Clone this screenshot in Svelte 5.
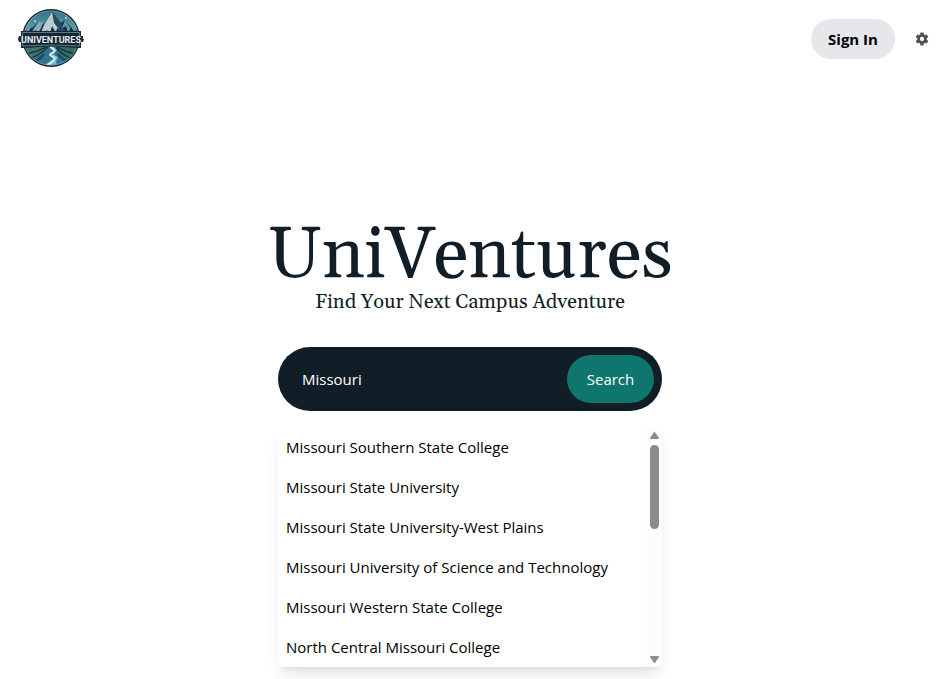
<script>
  let query = $state('Missouri');
  const colleges = [
    'Missouri Southern State College',
    'Missouri State University',
    'Missouri State University-West Plains',
    'Missouri University of Science and Technology',
    'Missouri Western State College',
    'North Central Missouri College'
  ];
</script>

<div class="page">
  <header>
    <a class="logo" href="#home" aria-label="UniVentures home">
      <svg width="66" height="60" viewBox="0 0 66 60">
        <defs>
          <clipPath id="disc"><circle cx="33" cy="30" r="27" /></clipPath>
          <linearGradient id="sky" x1="0" y1="0" x2="0" y2="1">
            <stop offset="0" stop-color="#2b7184" />
            <stop offset="1" stop-color="#75b6bf" />
          </linearGradient>
        </defs>
        <circle cx="33" cy="30" r="29" fill="#142937" />
        <circle cx="33" cy="30" r="27.6" fill="#8eb7bf" />
        <g clip-path="url(#disc)">
          <rect x="4" y="1" width="58" height="30" fill="url(#sky)" />
          <path d="M8 26 21 13l5 3L34 4l9 11 4-3 14 17H6z" fill="#173448" />
          <path d="M34 4l-8 13-4 10 7-5 2 6 3-10 4 7 1-5 5 4-4-9z" fill="#b9cdd2" />
          <path d="M34 4l2 11 4 5 3 8h7L43 15z" fill="#234c61" />
          <path d="M21 13l-8 12 5-3 1 5 4-7 2-5z" fill="#83aeb9" />
          <path d="M47 12l-3 8 4-2 2 7 3-4 5 7z" fill="#5f98a8" />
          <path d="M5 30l3-9 2 6 3-8 3 8 2-5 3 8zM45 30l3-8 2 5 3-8 3 8 2-6 3 9z" fill="#102938" />
          <circle cx="17" cy="13" r="1" fill="#c4dfe2" />
          <circle cx="48" cy="10" r="1" fill="#c4dfe2" />
          <rect x="4" y="38" width="58" height="22" fill="#347389" />
          <path d="M4 38h26L18 50 4 48z" fill="#3f7766" />
          <path d="M36 38h27v11l-15 2z" fill="#376b63" />
          <path d="M5 46q12-1 23-7M10 51q11-3 20-12M61 46q-12-1-22-7M57 51q-11-2-19-11" fill="none" stroke="#173b45" stroke-width="1.6" />
          <path d="M32 39l3 4-4 4 4 4-11 8h17l-3-5 2-5-5-3 4-4-4-4z" fill="#72bdce" />
          <path d="M32 39q8 4 2 6-5 2 2 4 3 3-7 8" fill="none" stroke="#e2f1f2" stroke-width="1.6" />
          <path d="M13 55q9-3 13-9M53 55q-9-3-13-9" fill="none" stroke="#17516d" stroke-width="3" />
        </g>
        <path d="M3 23h60v5h2v3h1l-1 3h-2v6h-4q-26-3-52 0H3v-6H1l-1-3 1-3h2z" fill="#152734" />
        <path d="M4.500 24.500h57v13.500q-28-2-57 0z" fill="none" stroke="#8299a2" stroke-width=".7" />
        <text x="33" y="34.500" text-anchor="middle">UNIVENTURES</text>
      </svg>
    </a>
    <div class="actions">
      <button class="signin" type="button">Sign In</button>
      <button class="settings" type="button" aria-label="Settings">
        <svg width="16" height="16" viewBox="0 0 24 24" fill="#505050">
          <path d="M19.140 12.940c.04-.3.06-.61.06-.94 0-.32-.02-.64-.07-.94l2.030-1.580a.49.49 0 0 0 .12-.61l-1.920-3.320a.488.488 0 0 0-.59-.22l-2.390.96c-.5-.38-1.030-.7-1.620-.94l-.36-2.540a.484.484 0 0 0-.48-.41h-3.840c-.24 0-.43.17-.47.41l-.36 2.540c-.59.24-1.130.57-1.620.94l-2.390-.96c-.22-.08-.47 0-.59.22L2.740 8.870c-.12.21-.08.47.12.61l2.030 1.580c-.05.3-.09.63-.09.94s.02.64.07.94l-2.030 1.580a.49.49 0 0 0-.12.61l1.920 3.320c.12.22.37.29.59.22l2.390-.96c.5.38 1.030.7 1.620.94l.36 2.540c.05.24.24.41.48.41h3.840c.24 0 .44-.17.47-.41l.36-2.540c.59-.24 1.130-.56 1.620-.94l2.390.96c.22.08.47 0 .59-.22l1.920-3.320c.12-.22.07-.47-.12-.61l-2.010-1.580zM12 15.200A3.200 3.200 0 1 1 12 8.800a3.200 3.200 0 0 1 0 6.400z" />
        </svg>
      </button>
    </div>
  </header>

  <main>
    <h1>UniVentures</h1>
    <p>Find Your Next Campus Adventure</p>
    <form onsubmit={(e) => e.preventDefault()}>
      <input type="text" aria-label="Search colleges" bind:value={query} />
      <button type="submit">Search</button>
    </form>
    <div class="results">
      <ul>
        {#each colleges as college}
          <li><button type="button" onclick={() => (query = college)}>{college}</button></li>
        {/each}
      </ul>
      <div class="scrollbar" aria-hidden="true">
        <svg width="9" height="7" viewBox="0 0 9 7"><path d="M4.500 0 Q5 0 5.500 1L9 6Q9 7 8 7H1Q0 7 0 6L3.500 1Q4 0 4.500 0z" /></svg>
        <div class="track"><div class="thumb"></div></div>
        <svg width="9" height="7" viewBox="0 0 9 7"><path d="M4.500 7Q4 7 3.500 6L0 1Q0 0 1 0H8Q9 0 9 1L5.500 6Q5 7 4.500 7z" /></svg>
      </div>
    </div>
  </main>
</div>

<style>
  :global(body) {
    margin: 0;
    background: #fff;
  }
  .page {
    font-family: 'Segoe UI', 'Open Sans', 'Noto Sans', sans-serif;
    font-size: 15px;
    line-height: 24px;
    color: #000;
    overflow: hidden;
  }
  * {
    box-sizing: border-box;
  }
  button,
  input {
    font: inherit;
    border: 0;
    padding: 0;
    background: none;
    color: inherit;
  }
  button {
    cursor: pointer;
  }
  svg {
    display: block;
  }
  header {
    display: flex;
    align-items: flex-start;
    justify-content: space-between;
    height: 78px;
    padding: 8px 11px 0 18px;
  }
  .logo text {
    font: bold 9px Roboto, sans-serif;
    fill: #e4edef;
  }
  .actions {
    display: flex;
    align-items: center;
    gap: 19px;
    padding-top: 11px;
  }
  .signin {
    height: 40px;
    width: 84px;
    border-radius: 20px;
    background: #e5e7eb;
    font-weight: 700;
  }
  main {
    display: flex;
    flex-direction: column;
    align-items: center;
    padding: 142px 17px 12px 16px;
  }
  h1,
  p {
    margin: 0;
    font-family: Georgia, Gelasio, 'Liberation Serif', serif;
    font-weight: 400;
    color: #111e27;
  }
  h1 {
    font-size: 72px;
    line-height: 72px;
  }
  p {
    font-size: 20px;
    line-height: 20px;
  }
  form {
    display: flex;
    width: 100%;
    max-width: 384px;
    height: 64px;
    margin-top: 35px;
    padding: 8px 8px 8px 24px;
    border-radius: 32px;
    background: #111e27;
    color: #fff;
  }
  form input {
    flex: 1;
    min-width: 0;
    outline: none;
  }
  form button {
    width: 87px;
    border-radius: 24px;
    background: #0f766e;
  }
  .results {
    display: flex;
    width: 100%;
    max-width: 384px;
    margin-top: 16px;
    border-radius: 4px;
    overflow: hidden;
    background: #fff;
    box-shadow: 0 10px 15px -3px rgba(0, 0, 0, 0.1), 0 4px 6px -4px rgba(0, 0, 0, 0.1);
  }
  ul {
    flex: 1;
    margin: 0;
    padding: 0;
    list-style: none;
  }
  li button {
    display: block;
    width: 100%;
    padding: 8px;
    text-align: left;
  }
  .scrollbar {
    display: flex;
    flex-direction: column;
    align-items: center;
    gap: 6px;
    width: 15px;
    padding: 5px 0 4px;
    background: #fcfcfc;
  }
  .scrollbar path {
    fill: #8b8b8b;
  }
  .track {
    flex: 1;
    width: 9px;
  }
  .thumb {
    height: 84px;
    border-radius: 5px;
    background: #8b8b8b;
  }
</style>
